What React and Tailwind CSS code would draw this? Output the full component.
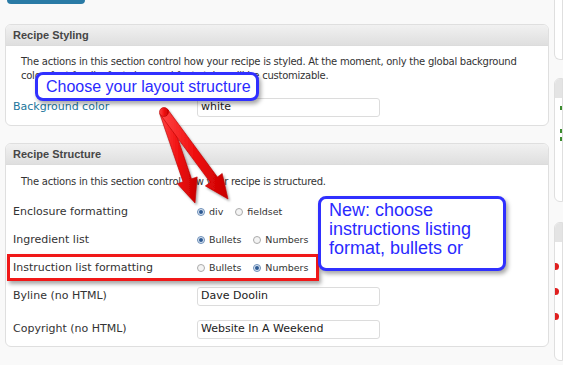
import React from "react";

// arrow polygon from tail (x1,y1) to tip (x2,y2)
const arrowPoints = (x1, y1, x2, y2, w = 9, hw = 22, hl = 22) => {
  const dx = x2 - x1;
  const dy = y2 - y1;
  const len = Math.hypot(dx, dy);
  const ux = dx / len;
  const uy = dy / len;
  const px = -uy;
  const py = ux;
  const bx = x2 - ux * hl;
  const by = y2 - uy * hl;
  const pts = [
    [x1 + (px * w) / 2, y1 + (py * w) / 2],
    [bx + (px * w) / 2, by + (py * w) / 2],
    [bx + (px * hw) / 2, by + (py * hw) / 2],
    [x2, y2],
    [bx - (px * hw) / 2, by - (py * hw) / 2],
    [bx - (px * w) / 2, by - (py * w) / 2],
    [x1 - (px * w) / 2, y1 - (py * w) / 2],
  ];
  return pts.map((p) => p.map((n) => n.toFixed(1)).join(",")).join(" ");
};

const Radio = ({ checked, label }) => (
  <label className="flex items-center gap-[4px] text-[9.5px] text-[#333]">
    <span
      className={`w-[8px] h-[8px] rounded-full border flex items-center justify-center ${
        checked ? "border-[#6d8fb8] bg-[#dbe6f3]" : "border-[#aaa] bg-[#f4f4f4]"
      }`}
    >
      {checked && <span className="w-[4px] h-[4px] rounded-full bg-[#2d5a93]" />}
    </span>
    {label}
  </label>
);

const Field = ({ value }) => (
  <div className="w-[183px] h-[19px] border border-[#dcdcdc] rounded-[3px] bg-white px-[3px] flex items-center text-[11px] text-[#222]">
    {value}
  </div>
);

const Row = ({ label, children, h = "h-[28px]" }) => (
  <div className={`flex items-center ${h}`}>
    <div className="w-[184px] text-[11px] text-[#333]">{label}</div>
    <div className="flex items-center gap-[12px]">{children}</div>
  </div>
);

const Panel = ({ title, children, className = "" }) => (
  <div className={`border border-[#dfdfdf] rounded-[6px] bg-white overflow-hidden ${className}`}>
    <div
      className="h-[21px] bg-gradient-to-b from-[#f1f1f1] to-[#dfdfdf] border-b border-[#dcdcdc] px-[7px] flex items-center text-[11px] font-bold text-[#464646]"
      style={{ fontFamily: '"Liberation Sans", Arial, sans-serif' }}
    >
      {title}
    </div>
    {children}
  </div>
);

export default function App() {
  return (
    <div
      className="relative w-[563px] h-[365px] overflow-hidden bg-[#f9f9f9]"
      style={{ fontFamily: '"DejaVu Sans", "Liberation Sans", sans-serif' }}
    >
      <div className="flex">
        {/* main column */}
        <div className="w-[552px] pl-[5px] flex flex-col">
          <div className="ml-[2px] w-[78px] h-[4px] bg-[#2a7ba6] rounded-b-[6px]" />
          <Panel title="Recipe Styling" className="mt-[20px] h-[102px]">
            <p className="px-[15px] pt-[9px] text-[10px] tracking-[-0.25px] leading-[14px] text-[#333]">
              The actions in this section control how your recipe is styled. At the moment, only the global background color, font family, font sizes and font styles will be customizable.
            </p>
            <div className="flex items-center mt-[15px] px-[7px]">
              <div className="w-[184px] text-[11px] text-[#21759b]">Background color</div>
              <Field value="white" />
            </div>
          </Panel>

          <Panel title="Recipe Structure" className="mt-[17px] h-[204px]">
            <p className="px-[15px] pt-[10px] text-[10px] tracking-[-0.25px] leading-[14px] text-[#333]">
              The actions in this section control how your recipe is structured.
            </p>
            <div className="px-[7px] mt-[9px] flex flex-col">
              <Row label="Enclosure formatting">
                <Radio checked label="div" />
                <Radio label="fieldset" />
              </Row>
              <Row label="Ingredient list">
                <Radio checked label="Bullets" />
                <Radio label="Numbers" />
              </Row>
              <Row label="Instruction list formatting">
                <Radio label="Bullets" />
                <Radio checked label="Numbers" />
              </Row>
              <Row label="Byline (no HTML)" h="h-[29px]">
                <Field value="Dave Doolin" />
              </Row>
              <Row label="Copyright (no HTML)" h="h-[36px]">
                <Field value="Website In A Weekend" />
              </Row>
            </div>
          </Panel>
        </div>

        {/* right column, cut off */}
        <div className="ml-[5px] flex-1 flex flex-col">
          <div className="h-[60px] border border-t-0 border-[#dfdfdf] rounded-bl-[6px] bg-white" />
          <div className="mt-[18px] h-[124px] border border-[#dfdfdf] rounded-l-[6px] bg-white overflow-hidden">
            <div className="h-[19px] bg-[#e4e4e4]" />
            <div className="pl-[5px] flex flex-col">
              <span className="mt-[8px] w-[2px] h-[4px] bg-[#3b8b2e]" />
              <span className="mt-[19px] w-[2px] h-[4px] bg-[#3b8b2e]" />
              <span className="mt-[4px] w-[2px] h-[4px] bg-[#3b8b2e]" />
            </div>
          </div>
          <div className="mt-[20px] h-[139px] border border-[#dfdfdf] rounded-l-[6px] bg-white overflow-hidden">
            <div className="h-[19px] bg-[#e4e4e4]" />
            <div className="flex flex-col">
              <span className="mt-[21px] w-[4px] h-[7px] rounded-r-full bg-[#e02020]" />
              <span className="mt-[18px] w-[4px] h-[7px] rounded-r-full bg-[#e02020]" />
              <span className="mt-[18px] w-[4px] h-[7px] rounded-r-full bg-[#e02020]" />
            </div>
          </div>
        </div>
      </div>

      {/* annotations */}
      <div className="absolute left-[7px] top-[254px] w-[312px] h-[27px] border-[3px] border-[#f01818] shadow-[2px_3px_4px_rgba(0,0,0,0.35)]" />

      <svg className="absolute left-0 top-0" width="563" height="365">
        <defs>
          <linearGradient id="ar" x1="0" y1="0" x2="1" y2="0">
            <stop offset="0" stopColor="#ff4545" />
            <stop offset="0.5" stopColor="#f01010" />
            <stop offset="1" stopColor="#c80000" />
          </linearGradient>
          <filter id="sh" x="-20%" y="-20%" width="140%" height="140%">
            <feDropShadow dx="1.5" dy="2" stdDeviation="1.2" floodOpacity="0.35" />
          </filter>
        </defs>
        <g fill="url(#ar)" stroke="#b80000" strokeWidth="0.6" strokeLinejoin="round" filter="url(#sh)">
          <polygon points={arrowPoints(164, 112, 195, 203, 9, 21, 24)} />
          <polygon points={arrowPoints(164, 112, 228, 199, 9, 21, 24)} />
          <circle cx="164" cy="112" r="4.5" />
        </g>
      </svg>

      <div
        className="absolute left-[35px] top-[72px] w-[224px] h-[29px] border-[3px] border-[#3030ff] rounded-[8px] bg-white shadow-[2px_3px_4px_rgba(0,0,0,0.35)] flex items-center pl-[8px] whitespace-nowrap text-[16px] text-[#2a2aff]"
        style={{ fontFamily: '"Liberation Sans", Arial, sans-serif' }}
      >
        Choose your layout structure
      </div>

      <div
        className="absolute left-[318px] top-[196px] w-[188px] h-[75px] border-[3px] border-[#3030ff] rounded-[8px] bg-white shadow-[2px_3px_4px_rgba(0,0,0,0.35)] pl-[8px] pt-[2px] whitespace-nowrap text-[18px] leading-[19px] text-[#2a2aff]"
        style={{ fontFamily: '"Liberation Sans", Arial, sans-serif' }}
      >
        New: choose
        <br />
        instructions listing
        <br />
        format, bullets or
      </div>
    </div>
  );
}
